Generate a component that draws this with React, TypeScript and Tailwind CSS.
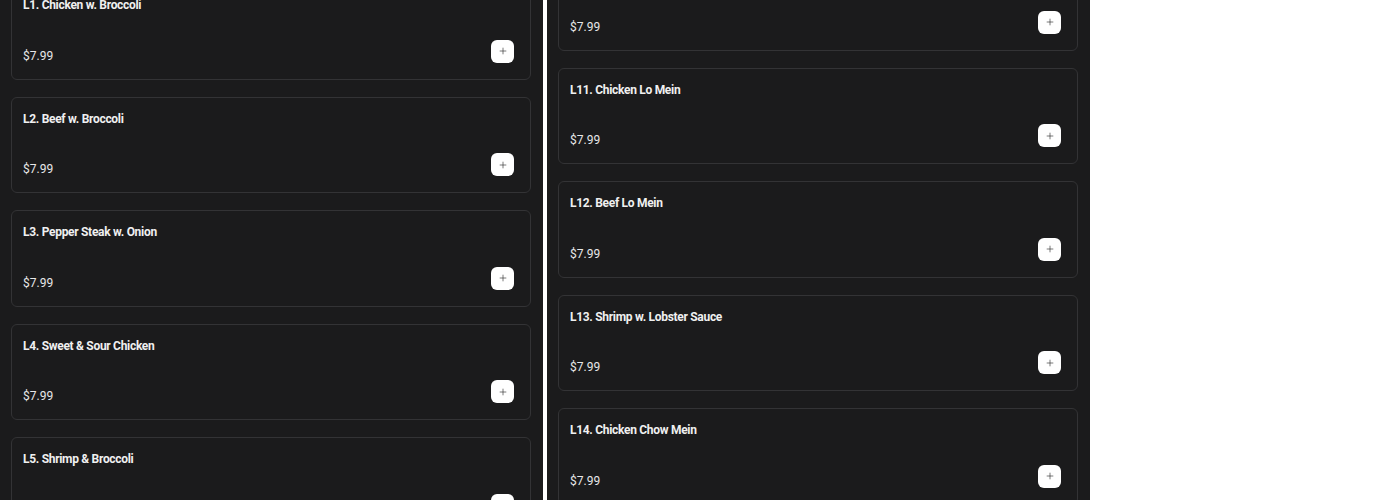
import { Plus } from 'lucide-react';

type Item = { name: string; price: string };

const left: Item[] = [
  { name: 'L1. Chicken w. Broccoli', price: '$7.99' },
  { name: 'L2. Beef w. Broccoli', price: '$7.99' },
  { name: 'L3. Pepper Steak w. Onion', price: '$7.99' },
  { name: 'L4. Sweet & Sour Chicken', price: '$7.99' },
  { name: 'L5. Shrimp & Broccoli', price: '$7.99' },
];

const right: Item[] = [
  { name: 'L10. Shrimp w. Mixed Vegetables', price: '$7.99' },
  { name: 'L11. Chicken Lo Mein', price: '$7.99' },
  { name: 'L12. Beef Lo Mein', price: '$7.99' },
  { name: 'L13. Shrimp w. Lobster Sauce', price: '$7.99' },
  { name: 'L14. Chicken Chow Mein', price: '$7.99' },
];

function Card({ item }: { item: Item }) {
  return (
    <div className="h-[96.5px] shrink-0 rounded-md border border-[#333335] bg-[#1b1b1c] px-[11px] flex flex-col">
      <p className="mt-[12px] text-[12px] leading-[18px] font-bold tracking-tight text-[#f0f0f0]">{item.name}</p>
      <div className="mt-auto mb-[16px] flex items-end justify-between">
        <span className="text-[12px] leading-[18px] text-[#e8e8e8] mb-[-2px]">{item.price}</span>
        <button className="mr-[5px] w-[23px] h-[23px] rounded-md bg-white flex items-center justify-center text-[#2a2a2a]">
          <Plus size={10} strokeWidth={1.5} />
        </button>
      </div>
    </div>
  );
}

function Column({ items, offset }: { items: Item[]; offset: string }) {
  return (
    <div className="w-[543px] h-[500px] overflow-hidden bg-[#1b1b1c] pl-[11px] pr-[12px]">
      <div className={`flex flex-col gap-[17px] ${offset}`}>
        {items.map((it) => (
          <Card key={it.name} item={it} />
        ))}
      </div>
    </div>
  );
}

export default function App() {
  return (
    <div className="w-[1400px] h-[500px] bg-white flex gap-[4px] font-['Roboto',sans-serif] overflow-hidden">
      <Column items={left} offset="mt-[-17px]" />
      <Column items={right} offset="mt-[-46px]" />
    </div>
  );
}
